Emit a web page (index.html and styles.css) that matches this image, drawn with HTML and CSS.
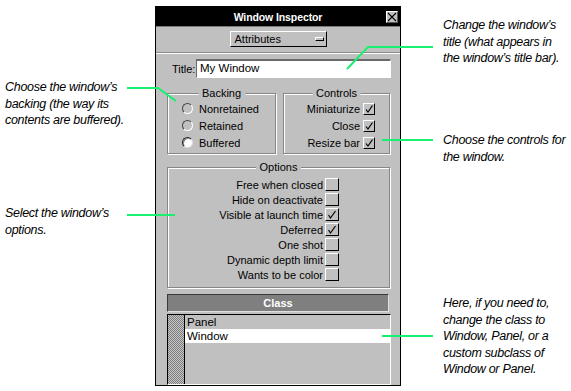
FILE: index.html
```html
<!DOCTYPE html>
<html>
<head>
<meta charset="utf-8">
<title>Window Inspector</title>
<link rel="stylesheet" href="styles.css">
</head>
<body>
<div class="page">
  <div class="col-left">
    <p class="note note-backing">Choose the window’s<br>backing (the way its<br>contents are buffered).</p>
    <p class="note note-options">Select the window’s<br>options.</p>
  </div>

  <div class="window">
    <div class="titlebar">
      <span></span>
      <span class="title">Window Inspector</span>
      <span class="close"><svg width="10" height="10" viewBox="0 0 10 10"><path d="M1 1L9 9M9 1L1 9" stroke="#000" stroke-width="1.1" fill="none"/></svg></span>
    </div>
    <div class="wbody">
      <div class="popup"><span class="popup-text">Attributes</span><span class="popup-icon"></span></div>
      <div class="sep"></div>
      <div class="title-row"><span class="title-label">Title:</span><div class="field">My Window</div></div>

      <div class="groups">
        <div class="group backing">
          <span class="legend">Backing</span>
          <div class="radio-row"><span class="radio"></span>Nonretained</div>
          <div class="radio-row"><span class="radio"></span>Retained</div>
          <div class="radio-row"><span class="radio on"></span>Buffered</div>
        </div>
        <div class="group controls">
          <span class="legend">Controls</span>
          <div class="check-row"><span>Miniaturize</span><span class="check small"><svg viewBox="0 0 10 10"><path d="M2 5.5L4 8L8.5 1.5" stroke="#000" stroke-width="1.2" fill="none"/></svg></span></div>
          <div class="check-row"><span>Close</span><span class="check small"><svg viewBox="0 0 10 10"><path d="M2 5.5L4 8L8.5 1.5" stroke="#000" stroke-width="1.2" fill="none"/></svg></span></div>
          <div class="check-row"><span>Resize bar</span><span class="check small"><svg viewBox="0 0 10 10"><path d="M2 5.5L4 8L8.5 1.5" stroke="#000" stroke-width="1.2" fill="none"/></svg></span></div>
        </div>
      </div>

      <div class="group options">
        <span class="legend">Options</span>
        <div class="opt-row"><span>Free when closed</span><span class="check"></span></div>
        <div class="opt-row"><span>Hide on deactivate</span><span class="check"></span></div>
        <div class="opt-row"><span>Visible at launch time</span><span class="check"><svg viewBox="0 0 12 11"><path d="M2.5 6L4.5 9L9.5 2" stroke="#000" stroke-width="1.2" fill="none"/></svg></span></div>
        <div class="opt-row"><span>Deferred</span><span class="check"><svg viewBox="0 0 12 11"><path d="M2.5 6L4.5 9L9.5 2" stroke="#000" stroke-width="1.2" fill="none"/></svg></span></div>
        <div class="opt-row"><span>One shot</span><span class="check"></span></div>
        <div class="opt-row"><span>Dynamic depth limit</span><span class="check"></span></div>
        <div class="opt-row"><span>Wants to be color</span><span class="check"></span></div>
      </div>

      <div class="classbar">Class</div>
      <div class="list">
        <div class="list-strip"></div>
        <div class="list-items">
          <div class="item">Panel</div>
          <div class="item selected">Window</div>
        </div>
      </div>
    </div>
  </div>

  <div class="col-right">
    <p class="note note-title">Change the window’s<br>title (what appears in<br>the window’s title bar).</p>
    <p class="note note-controls">Choose the controls for<br>the window.</p>
    <p class="note note-class">Here, if you need to,<br>change the class to<br>Window, Panel, or a<br>custom subclass of<br>Window or Panel.</p>
  </div>

  <svg class="leaders" width="571" height="391" viewBox="0 0 571 391">
    <g stroke="#19f06e" stroke-width="2" fill="none">
      <polyline points="127,88 158,88 176,101"/>
      <line x1="127" y1="215" x2="175" y2="215"/>
      <polyline points="347,69 368,47 433,47"/>
      <line x1="382" y1="140" x2="433" y2="140"/>
      <line x1="382" y1="336" x2="433" y2="336"/>
    </g>
  </svg>
</div>
</body>
</html>
```

FILE: styles.css
```css
html, body {
  margin: 0;
  padding: 0;
  background: #fff;
}

.page {
  position: relative;
  display: flex;
  width: 571px;
  height: 391px;
  overflow: hidden;
  font-family: "Liberation Sans", Arial, sans-serif;
  color: #000;
}

.note {
  margin: 0;
  font-style: italic;
  font-size: 12.5px;
  letter-spacing: -0.3px;
  line-height: 16.5px;
  white-space: nowrap;
}

.col-left {
  width: 155px;
  flex: 0 0 155px;
  padding-left: 5px;
  box-sizing: border-box;
}
.note-backing { margin-top: 79px; }
.note-options { margin-top: 76.5px; }

.col-right {
  flex: 1;
  padding-left: 42px;
}
.note-title { margin-top: 17px; }
.note-controls { margin-top: 65.5px; }
.note-class { margin-top: 130px; }

.leaders {
  position: absolute;
  left: 0;
  top: 0;
  pointer-events: none;
}

/* window */
.window {
  flex: 0 0 246px;
  width: 246px;
  height: 380px;
  margin-top: 6px;
  box-sizing: border-box;
  border: 1px solid #000;
  background: #c0c0c0;
  display: flex;
  flex-direction: column;
  font-size: 11px;
}

.titlebar {
  height: 19px;
  border-bottom: 1px solid #7a7a7a;
  background: #000;
  display: grid;
  grid-template-columns: 1fr auto 1fr;
  align-items: center;
}
.title {
  color: #fff;
  font-weight: bold;
  font-size: 10.5px;
  letter-spacing: -0.1px;
}
.close {
  justify-self: end;
  margin-right: 2px;
  width: 12px;
  height: 12px;
  box-sizing: border-box;
  background: #c0c0c0;
  border: 1px solid;
  border-color: #fff #555 #555 #fff;
  display: flex;
  align-items: center;
  justify-content: center;
}
.close svg { display: block; }

.wbody {
  flex: 1;
  display: flex;
  flex-direction: column;
}

.popup {
  margin: 4px auto 0;
  width: 97px;
  height: 16px;
  box-sizing: border-box;
  border: 1px solid;
  border-color: #fff #000 #000 #fff;
  display: flex;
  align-items: center;
  justify-content: space-between;
  padding: 0 2px 0 4px;
}
.popup-icon {
  width: 9px;
  height: 4px;
  box-sizing: border-box;
  border: 1px solid;
  border-color: #fff #000 #000 #fff;
  background: #c0c0c0;
}

.sep {
  margin-top: 5px;
  height: 2px;
  box-sizing: border-box;
  border-top: 1px solid #8a8a8a;
  border-bottom: 1px solid #fff;
}

.title-row {
  margin-top: 5px;
  height: 19px;
  display: flex;
  align-items: center;
  padding-left: 16px;
}
.title-label { width: 24px; }
.field {
  width: 195px;
  height: 19px;
  box-sizing: border-box;
  background: #fff;
  border: 1px solid;
  border-color: #6a6a6a #fff #fff #6a6a6a;
  border-top-width: 2px;
  padding-left: 3px;
  line-height: 15px;
  font-size: 11.5px;
}

.groups {
  margin-top: 15px;
  padding-left: 11px;
  display: flex;
  gap: 7px;
}

.group {
  position: relative;
  box-sizing: border-box;
  border: 1px solid #868686;
  box-shadow: inset 1px 1px 0 #fff, 1px 1px 0 #fff;
}
.legend {
  position: absolute;
  top: -7px;
  left: 50%;
  transform: translateX(-50%);
  background: #c0c0c0;
  padding: 0 4px;
  line-height: 13px;
  white-space: nowrap;
}

.backing {
  width: 109px;
  height: 61px;
  padding: 6px 0 0 14px;
}
.radio-row {
  height: 17px;
  display: flex;
  align-items: center;
}
.radio {
  width: 11px;
  height: 11px;
  box-sizing: border-box;
  border-radius: 50%;
  border: 1px solid;
  border-color: #444 #fff #fff #444;
  margin-right: 6px;
}
.radio.on {
  background: #fff;
  border-color: #222 #ddd #ddd #222;
  box-shadow: inset 1px 1px 0 #888;
}

.controls {
  width: 107px;
  height: 61px;
  padding: 6px 14px 0 0;
}
.check-row {
  height: 17px;
  display: flex;
  align-items: center;
  justify-content: flex-end;
  gap: 3px;
}
.check {
  width: 14px;
  height: 13px;
  box-sizing: border-box;
  border: 1px solid;
  border-color: #fff #000 #000 #fff;
  background: #c0c0c0;
  display: flex;
}
.check svg { width: 100%; height: 100%; display: block; }
.check.small {
  width: 12px;
  height: 12px;
}

.options {
  margin: 13px 0 0 11px;
  width: 223px;
  height: 121px;
  padding: 9px 50px 0 0;
}
.opt-row {
  height: 15px;
  display: flex;
  align-items: center;
  justify-content: flex-end;
  gap: 2px;
}

.classbar {
  margin: 6px 0 0 11px;
  width: 222px;
  height: 18px;
  box-sizing: border-box;
  background: #7f7f7f;
  border: 1px solid;
  border-color: #3a3a3a #e0e0e0 #e0e0e0 #3a3a3a;
  color: #fff;
  font-weight: bold;
  text-align: center;
  line-height: 16px;
}

.list {
  margin: 2px 0 0 11px;
  width: 224px;
  height: 71px;
  box-sizing: border-box;
  border: 1px solid;
  border-color: #000 #fff #fff #000;
  display: flex;
}
.list-strip {
  width: 17px;
  box-sizing: border-box;
  border-right: 1px solid #000;
  background: repeating-conic-gradient(#7c7c7c 0 25%, #c8c8c8 0 50%) 0 0 / 2px 2px;
}
.list-items {
  flex: 1;
}
.item {
  height: 14px;
  line-height: 14px;
  padding-left: 2px;
  font-size: 11.5px;
}
.item.selected {
  background: #fff;
}
```
